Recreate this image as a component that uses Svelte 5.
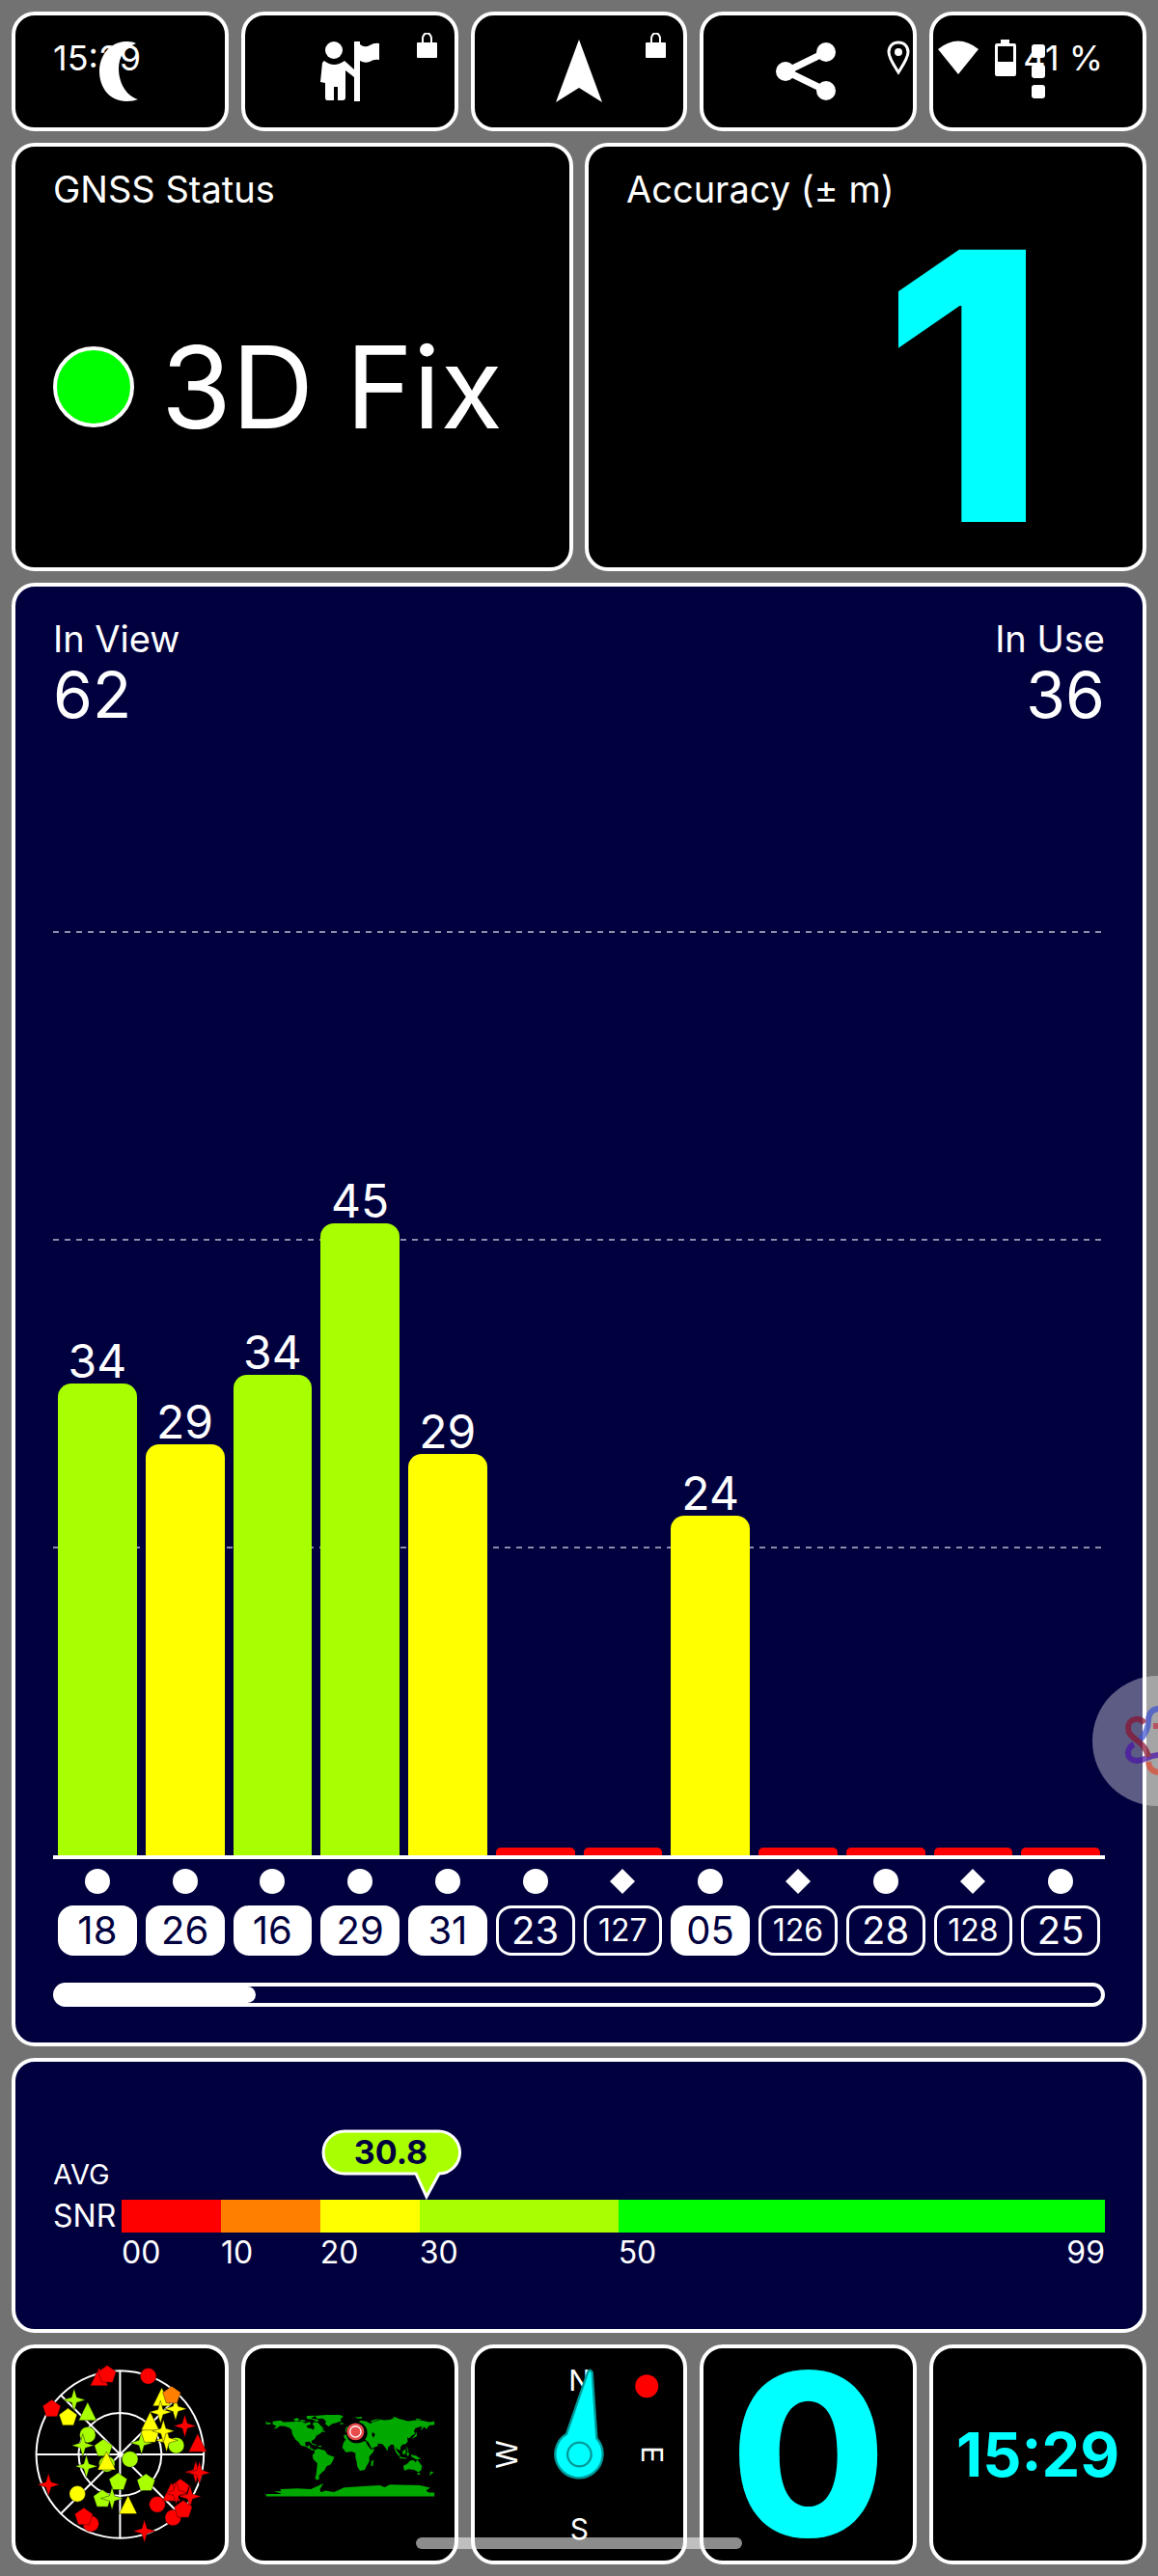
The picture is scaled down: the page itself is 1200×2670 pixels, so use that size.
<script>
  const RED = "#ff0000";
  const ORANGE = "#ff8000";
  const YELLOW = "#ffff00";
  const LIME = "#a8ff00";
  const GREEN = "#00ff00";

  // level is the bar height in percent of the plot
  const satellites = [
    { id: "18", snr: 34, level: 38.3, color: LIME, used: true },
    { id: "26", snr: 29, level: 33.4, color: YELLOW, used: true },
    { id: "16", snr: 34, level: 39, color: LIME, used: true },
    { id: "29", snr: 45, level: 51.3, color: LIME, used: true },
    { id: "31", snr: 29, level: 32.6, color: YELLOW, used: true },
    { id: "23", snr: 0, level: 0.6, color: RED, used: false },
    { id: "127", snr: 0, level: 0.6, color: RED, used: false, sbas: true },
    { id: "05", snr: 24, level: 27.6, color: YELLOW, used: true },
    { id: "126", snr: 0, level: 0.6, color: RED, used: false, sbas: true },
    { id: "28", snr: 0, level: 0.6, color: RED, used: false },
    { id: "128", snr: 0, level: 0.6, color: RED, used: false, sbas: true },
    { id: "25", snr: 0, level: 0.6, color: RED, used: false },
  ];

  const gridLines = [25, 50, 75];

  const ranges = [
    { from: "00", span: 10, color: RED },
    { from: "10", span: 10, color: ORANGE },
    { from: "20", span: 10, color: YELLOW },
    { from: "30", span: 20, color: LIME },
    { from: "50", to: "99", span: 49, color: GREEN },
  ];
  const average = 30.8;

  const shapes = {
    circle: "M-25 0A25 25 0 1 1 25 0A25 25 0 1 1 -25 0Z",
    triangle: "M0 -32L28 25H-28Z",
    pentagon: "M0 -28L28 -8L17 25H-17L-28 -8Z",
    star: "M0 -36L8 -8L35 0L8 8L0 36L-8 8L-35 0L-8 -8Z",
  };

  const sky = [
    ["triangle", 310, 133, RED],
    ["pentagon", 335, 122, RED],
    ["circle", 463, 128, RED],
    ["pentagon", 162, 229, RED],
    ["star", 232, 202, LIME],
    ["pentagon", 213, 256, YELLOW],
    ["triangle", 274, 241, LIME],
    ["circle", 274, 311, LIME],
    ["star", 259, 344, LIME],
    ["pentagon", 323, 352, LIME],
    ["star", 270, 409, LIME],
    ["circle", 334, 402, LIME],
    ["triangle", 333, 395, YELLOW],
    ["circle", 406, 387, LIME],
    ["star", 442, 336, LIME],
    ["triangle", 505, 196, YELLOW],
    ["star", 548, 230, YELLOW],
    ["star", 501, 240, YELLOW],
    ["pentagon", 536, 187, ORANGE],
    ["pentagon", 468, 309, YELLOW],
    ["triangle", 469, 271, YELLOW],
    ["circle", 550, 344, LIME],
    ["star", 520, 328, YELLOW],
    ["star", 510, 299, YELLOW],
    ["star", 577, 283, RED],
    ["triangle", 617, 339, RED],
    ["star", 611, 427, RED],
    ["star", 622, 429, RED],
    ["star", 152, 466, RED],
    ["circle", 242, 495, YELLOW],
    ["pentagon", 369, 457, LIME],
    ["pentagon", 456, 460, LIME],
    ["pentagon", 320, 510, LIME],
    ["star", 350, 509, LIME],
    ["triangle", 400, 532, YELLOW],
    ["circle", 491, 528, RED],
    ["pentagon", 563, 476, RED],
    ["triangle", 535, 492, RED],
    ["star", 550, 492, RED],
    ["star", 593, 503, RED],
    ["circle", 540, 569, RED],
    ["pentagon", 572, 543, RED],
    ["circle", 284, 588, RED],
    ["pentagon", 262, 566, RED],
    ["star", 451, 611, RED],
  ];
</script>

{#snippet lock()}
  <svg class="lock" viewBox="0 0 21 26" aria-hidden="true">
    <path d="M6 11V6a4 5 0 0 1 9 0v5" fill="none" stroke="#fff" stroke-width="2" />
    <rect y="10" width="21" height="16" rx="1" fill="#fff" />
  </svg>
{/snippet}

<main>
  <nav class="tiles">
    <button class="panel tool" aria-label="Night mode">
      <svg class="icon" viewBox="0 0 62 62">
        <path d="M48 2C44 0 40 0 37 0C20 1 10 15 10 31C10 48 21 62 38 62C43 62 47 61 50 60C37 56 30 42 30 28C30 16 36 7 48 2Z" />
      </svg>
    </button>
    <button class="panel tool" aria-label="Guide">
      <svg class="icon" viewBox="0 0 62 62">
        <circle cx="15" cy="9" r="9" />
        <path d="M5 20Q15 28 26 20L36 29V37L27 30V58Q27 61 24 61H19V47H15V61H8Q6 61 6 58V43L1 42L3 22Z" />
        <path d="M36 0H42V3Q47 7 52 4Q57 1 62 2V19Q57 18 52 21Q47 23 42 20V62H36Z" />
      </svg>
      {@render lock()}
    </button>
    <button class="panel tool" aria-label="Navigate">
      <svg class="icon" viewBox="0 0 62 62">
        <path d="M31 -2L55 63L31 48L7 63Z" />
      </svg>
      {@render lock()}
    </button>
    <button class="panel tool" aria-label="Share">
      <svg class="icon" viewBox="0 0 62 62">
        <path d="M49 11L8 31L49 51" fill="none" stroke="#fff" stroke-width="7" />
        <circle cx="49" cy="11" r="10" />
        <circle cx="7" cy="31" r="10" />
        <circle cx="49" cy="51" r="10" />
      </svg>
    </button>
    <button class="panel tool" aria-label="More options">
      <svg class="icon" viewBox="0 0 62 62">
        <rect x="24" y="3" width="14" height="14" rx="3" />
        <rect x="24" y="24" width="14" height="14" rx="3" />
        <rect x="24" y="45" width="14" height="14" rx="3" />
      </svg>
    </button>
  </nav>

  <div class="pair">
    <section class="panel info">
      <h2>GNSS Status</h2>
      <div class="status">
        <span class="lamp"></span>
        <span class="fix">3D Fix</span>
      </div>
    </section>
    <section class="panel info">
      <h2>Accuracy (± m)</h2>
      <div class="accuracy">1</div>
    </section>
  </div>

  <section class="panel navy chart">
    <header>
      <div class="count"><span>In View</span><strong>62</strong></div>
      <div class="count right"><span>In Use</span><strong>36</strong></div>
    </header>
    <div class="plot">
      <svg class="lines" aria-hidden="true">
        {#each gridLines as y}
          <line x1="0" x2="100%" y1="{y}%" y2="{y}%" />
        {/each}
      </svg>
      <div class="bars">
        {#each satellites as sat}
          <div class="column">
            {#if sat.snr}
              <span class="snr">{sat.snr}</span>
            {/if}
            <div
              class="bar"
              class:low={!sat.snr}
              style="height: {sat.level}%; background: {sat.color}"
            ></div>
          </div>
        {/each}
      </div>
    </div>
    <div class="ids">
      {#each satellites as sat}
        <div class="sat">
          <svg class="kind" viewBox="0 0 26 26" aria-hidden="true">
            {#if sat.sbas}
              <path d="M13 0L26 13L13 26L0 13Z" />
            {:else}
              <circle cx="13" cy="13" r="13" />
            {/if}
          </svg>
          <span class="badge" class:used={sat.used} class:small={sat.id.length > 2}>{sat.id}</span>
        </div>
      {/each}
    </div>
    <div class="scroller"><div class="thumb"></div></div>
  </section>

  <section class="panel navy average">
    <span class="avg">AVG</span>
    <div class="pointer">
      <svg class="bubble" viewBox="0 0 145 73" style="left: {(average / 99) * 100}%">
        <path d="M24 2H121A22 22 0 0 1 122 46L109 70L98 46H24A22 22 0 0 1 24 2Z" />
        <text x="72" y="36">{average}</text>
      </svg>
    </div>
    <span class="unit">SNR</span>
    <div class="scale">
      {#each ranges as range}
        <div style="flex-grow: {range.span}; background: {range.color}"></div>
      {/each}
    </div>
    <div class="scale ticks">
      {#each ranges as range}
        <div style="flex-grow: {range.span}">
          <span>{range.from}</span>
          {#if range.to}
            <span>{range.to}</span>
          {/if}
        </div>
      {/each}
    </div>
  </section>

  <div class="tiles">
    <div class="panel tile">
      <svg viewBox="49 42 652 660" role="img" aria-label="Sky view">
        <g fill="none" stroke="#fff" stroke-width="6">
          <circle cx="375" cy="372" r="261" />
          <circle cx="375" cy="372" r="129" />
          <path d="M375 111V633M114 372H636M191 188L559 556M559 188L191 556" />
        </g>
        {#each sky as [shape, x, y, color]}
          <path
            d={shapes[shape]}
            transform="translate({x} {y})"
            fill={color}
            stroke="#000"
            stroke-opacity="0.4"
            stroke-width="3"
          />
        {/each}
      </svg>
    </div>

    <div class="panel tile">
      <svg viewBox="40 42 652 660" role="img" aria-label="World map">
        <g fill="#00a800">
          <!-- americas -->
          <path d="M105 267L109 273H120V278H105ZM126 269L150 266L160 271L215 269L228 275L240 270L246 277L231 283L235 289L249 292L253 296L256 285L250 278L254 271L267 273L274 280L286 292L279 293L291 302L279 301L274 307L262 313L258 323L247 330L248 340L241 332L228 333L227 342L233 348L240 342L243 352L257 358L250 360L230 348L214 344L206 333L198 327L190 315L186 304L185 295L178 289L164 284L148 283L140 290L128 292L138 284L126 278Z" />
          <path d="M190 263L203 258L210 265L198 269ZM211 264L225 265L231 269L216 270ZM232 252L259 251L246 260L270 264L265 271L250 263L232 261Z" />
          <path d="M257 252L292 249L336 249L347 255L338 260L339 268L322 274L313 276L300 285L290 277L292 268L282 260L265 261ZM335 275L345 273L346 277L337 279Z" />
          <path d="M247 337L263 342L261 345L247 340ZM268 345H278V349H268Z" />
          <path d="M257 358L268 354L289 360L297 372L318 380L314 391L307 403L294 409L288 421L277 431L270 438L271 449L265 452L258 447L262 431L265 400L252 386L250 375L256 367Z" />
          <!-- europe and asia -->
          <path d="M350 323L347 311H359L356 300L371 295L382 286L390 277L400 266L418 269L430 276L445 269L463 263L472 265L491 264L505 258L528 263L548 268L570 265L594 267L615 271L630 268V280L615 281L604 294L600 287L591 284L571 290L566 300L571 306L558 315L552 322L545 319L547 332L540 340L529 342L524 350L524 359L515 356L508 348L515 366L506 357L503 342L495 341L485 350L484 362L475 348L468 340L453 338L454 346L434 353L425 335L413 325L389 325L378 317L365 320L358 327Z" />
          <path d="M355 287L362 283L361 301L352 301ZM382 256L404 255V260L390 260ZM430 268L445 263L462 260L435 271ZM501 254L520 259L505 261ZM573 260L588 262V265H573ZM591 284L602 281L587 298ZM576 302L574 316L558 323L568 313Z" />
          <!-- africa -->
          <path d="M354 325L382 325L397 333L416 331L422 344L432 356L443 354L439 365L427 378L427 394L419 407L413 420L398 423L390 411L388 397L384 382L384 368L373 363L354 365L343 351L346 337ZM433 394L441 388L438 408L432 407Z" />
          <!-- oceania -->
          <path d="M510 357L524 374L519 377L508 363ZM521 379L543 383V386L521 383ZM530 362L541 355L540 370L532 373ZM545 363L552 369L548 378L543 373ZM541 344L550 361L546 362ZM557 373L573 376L588 387L572 387L557 378Z" />
          <path d="M533 407L544 402L555 391L565 390L572 397L576 388L591 407L589 421L580 428L567 420L550 418L536 422ZM577 430H585V435H577ZM618 425L628 428L614 438Z" />
          <!-- antarctica -->
          <path d="M105 495H155L130 486L152 487L150 480L204 478L245 480L284 462L273 481L276 490L290 485L317 489L349 475L430 470L460 468L475 474L491 466L585 468L617 476L604 485L613 491H630V503H105Z" />
        </g>
        <path d="M437 302L445 309L441 320L435 312Z" fill="#000" />
        <circle cx="388" cy="304" r="33" fill="#000" />
        <circle cx="384" cy="301" r="27" fill="#e84c4c" />
        <circle cx="384" cy="301" r="17" fill="none" stroke="#fff" stroke-width="4" />
      </svg>
    </div>

    <div class="panel tile">
      <svg viewBox="34 42 652 660" role="img" aria-label="Compass">
        <g class="points">
          <text transform="translate(360 140)">N</text>
          <text transform="translate(588 372) rotate(90)">E</text>
          <text transform="translate(360 603)">S</text>
          <text transform="translate(132 372) rotate(-90)">W</text>
        </g>
        <path
          d="M320 308L386 116Q392 103 400 116L414 322A74 74 0 1 1 320 308Z"
          fill="#00ffff"
          stroke="#009999"
          stroke-width="7"
        />
        <circle cx="360" cy="372" r="37" fill="none" stroke="#009999" stroke-width="7" />
        <circle cx="570" cy="159" r="36" fill="#ff0000" />
      </svg>
    </div>

    <div class="panel tile speed">0</div>
    <div class="panel tile clock">15:29</div>
  </div>

  <div class="statusbar">
    <span>15:29</span>
    <div class="indicators">
      <svg width="24" height="36" viewBox="0 0 24 36" aria-hidden="true">
        <path d="M12 2C6 2 2 6 2 12C2 18 7 25 12 33C17 25 22 18 22 12C22 6 18 2 12 2Z" fill="none" stroke="#fff" stroke-width="3" />
        <circle cx="12" cy="12" r="4" fill="#fff" />
      </svg>
      <svg class="wifi" width="42" height="36" viewBox="0 0 42 36" aria-hidden="true">
        <path d="M0 9Q21 -8 42 9L21 35Z" fill="#fff" />
      </svg>
      <svg width="22" height="38" viewBox="0 0 22 38" aria-hidden="true">
        <path d="M6 0H15V4H20Q22 4 22 6V36Q22 38 20 38H2Q0 38 0 36V6Q0 4 2 4H6ZM3 7V23H19V7Z" fill="#fff" fill-rule="evenodd" />
      </svg>
      <span>41 %</span>
    </div>
  </div>

  <button class="assistant" aria-label="Assistant">
    <svg viewBox="0 0 135 135">
      <g fill="none" stroke-width="6" opacity="0.7">
        <path d="M49 67Q58 57 58 47Q58 34 70 34" stroke="#3a50d0" />
        <path d="M43 71C35 75 34 87 46 88C54 88 58 82 70 82" stroke="#4a10a8" />
        <path d="M54 49C49 42 37 44 37 54C37 63 46 65 52 72Q57 78 58 84" stroke="#8a1030" />
        <path d="M58 89Q59 100 70 100" stroke="#e04830" />
        <path d="M63 52H70" stroke="#c03048" />
      </g>
    </svg>
  </button>

  <div class="home"></div>
</main>

<style>
  :global(body) {
    margin: 0;
    background: #727272;
  }

  main {
    position: relative;
    overflow-x: clip;
    display: flex;
    flex-direction: column;
    gap: 12px;
    padding: 12px;
    background: #727272;
    color: #fff;
    font-family: Inter, "Open Sans", sans-serif;
    font-size: 38px;
  }

  .panel {
    box-sizing: border-box;
    border: 4px solid #fff;
    border-radius: 24px;
    background: #000;
  }

  .navy {
    background: #00003f;
  }

  .tiles {
    display: grid;
    grid-template-columns: repeat(5, 1fr);
    gap: 13px;
  }

  .tool {
    position: relative;
    display: flex;
    align-items: center;
    justify-content: center;
    height: 124px;
    padding: 0;
  }

  .icon {
    width: 62px;
    height: 62px;
    fill: #fff;
    overflow: visible;
  }

  .lock {
    position: absolute;
    top: 18px;
    right: 18px;
    width: 21px;
    height: 26px;
  }

  .pair {
    display: grid;
    grid-template-columns: 1fr 1fr;
    gap: 12px;
  }

  .info {
    display: flex;
    flex-direction: column;
    min-height: 444px;
    padding: 20px 39px 6px;
  }

  h2 {
    margin: 0;
    font-size: 38px;
    line-height: 48px;
    font-weight: 400;
  }

  .status {
    flex: 1;
    display: flex;
    align-items: center;
    gap: 28px;
  }

  .lamp {
    box-sizing: border-box;
    width: 84px;
    height: 84px;
    border: 4px solid #fff;
    border-radius: 50%;
    background: #00ff00;
  }

  .fix {
    font-size: 118px;
    line-height: 120px;
  }

  .accuracy {
    padding-right: 60px;
    color: #00ffff;
    font-size: 388px;
    line-height: 360px;
    font-weight: 800;
    text-align: right;
  }

  .chart {
    display: grid;
    padding: 32px 39px 37px;
  }

  .chart header {
    grid-area: 1 / 1;
    display: flex;
    justify-content: space-between;
    align-self: start;
  }

  .count {
    display: flex;
    flex-direction: column;
    line-height: 44px;
  }

  .count strong {
    font-size: 66px;
    line-height: 72px;
    font-weight: 400;
  }

  .right {
    text-align: right;
  }

  .plot {
    grid-area: 1 / 1;
    display: grid;
    height: 1276px;
    margin-top: 7px;
    border-bottom: 4px solid #fff;
  }

  .lines {
    grid-area: 1 / 1;
    width: 100%;
    height: 100%;
  }

  .lines line {
    stroke: #8c8caa;
    stroke-width: 2;
    stroke-dasharray: 6 6;
  }

  .bars,
  .ids {
    display: grid;
    grid-template-columns: repeat(12, 1fr);
    column-gap: 9px;
    padding: 0 5px;
  }

  .bars {
    grid-area: 1 / 1;
    z-index: 1;
  }

  .column {
    display: flex;
    flex-direction: column;
    justify-content: flex-end;
    align-items: center;
    height: 1276px;
  }

  .snr {
    font-size: 48px;
    line-height: 46px;
  }

  .bar {
    flex-shrink: 0;
    width: 100%;
    border-radius: 14px 14px 0 0;
  }

  .bar.low {
    border-radius: 5px 5px 0 0;
  }

  .sat {
    display: flex;
    flex-direction: column;
    align-items: center;
    gap: 12px;
    padding-top: 10px;
  }

  .kind {
    width: 26px;
    height: 26px;
    fill: #fff;
  }

  .badge {
    box-sizing: border-box;
    width: 100%;
    height: 52px;
    border: 3px solid #fff;
    border-radius: 16px;
    font-size: 40px;
    line-height: 46px;
    text-align: center;
  }

  .badge.used {
    background: #fff;
    color: #00003f;
  }

  .badge.small {
    font-size: 32px;
  }

  .scroller {
    height: 17px;
    margin-top: 28px;
    border: 4px solid #fff;
    border-radius: 13px;
  }

  .thumb {
    width: 19%;
    height: 100%;
    border-radius: 0 10px 10px 0;
    background: #fff;
  }

  .average {
    display: grid;
    grid-template-columns: 71px 1fr;
    grid-template-rows: 73px 34px 42px;
    min-height: 285px;
    padding: 70px 39px 0;
    font-size: 32px;
  }

  .avg {
    align-self: end;
    padding-bottom: 8px;
    font-size: 29px;
    line-height: 36px;
  }

  .unit {
    line-height: 34px;
  }

  .pointer {
    position: relative;
  }

  .bubble {
    position: absolute;
    top: 0;
    width: 145px;
    height: 73px;
    margin-left: -110px;
  }

  .bubble path {
    fill: #a8ff00;
    stroke: #fff;
    stroke-width: 3;
  }

  .bubble text {
    fill: #00003f;
    font-size: 34px;
    font-weight: 700;
    text-anchor: middle;
  }

  .scale {
    display: flex;
  }

  .scale div {
    flex-basis: 0;
    min-width: 0;
  }

  .ticks {
    grid-column: 2;
    line-height: 42px;
  }

  .ticks div {
    display: flex;
    justify-content: space-between;
  }

  .tile {
    display: flex;
    align-items: center;
    justify-content: center;
    height: 228px;
    min-width: 0;
    color: #00ffff;
    font-weight: 700;
  }

  .tile svg {
    width: 100%;
    height: 100%;
  }

  .points text {
    fill: #fff;
    font-size: 90px;
    font-weight: 400;
    text-anchor: middle;
    dominant-baseline: central;
  }

  .speed {
    font-size: 234px;
    font-weight: 800;
    line-height: 220px;
  }

  .clock {
    font-size: 63px;
  }

  .statusbar {
    position: absolute;
    top: 36px;
    left: 0;
    right: 0;
    display: flex;
    justify-content: space-between;
    padding: 0 57px 0 55px;
    font-size: 36px;
    line-height: 48px;
    pointer-events: none;
  }

  .indicators {
    display: flex;
    align-items: center;
  }

  .wifi {
    margin: 0 17px 0 29px;
  }

  .indicators span {
    margin-left: 7px;
  }

  .assistant {
    position: absolute;
    top: 1737px;
    right: -67px;
    width: 135px;
    height: 135px;
    padding: 0;
    border: none;
    border-radius: 50%;
    background: rgba(255, 255, 255, 0.36);
  }

  .home {
    position: absolute;
    bottom: 28px;
    left: 50%;
    width: 338px;
    height: 12px;
    border-radius: 6px;
    background: rgba(255, 255, 255, 0.55);
    transform: translateX(-50%);
  }
</style>
